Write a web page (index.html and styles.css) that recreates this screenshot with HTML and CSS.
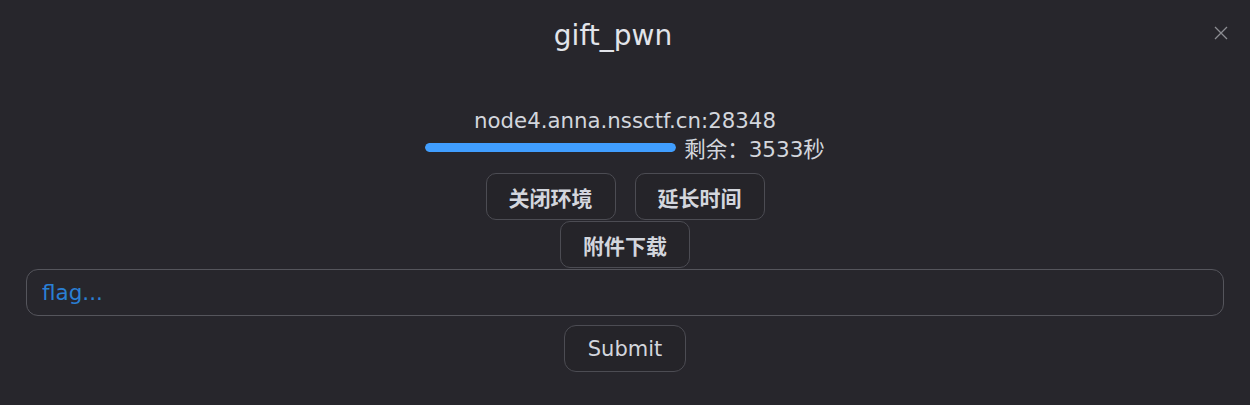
FILE: index.html
```html
<!DOCTYPE html>
<html lang="en">
  <head>
    <meta charset="UTF-8" />
    <meta name="viewport" content="width=device-width, initial-scale=1.0" />
    <title>gift_pwn</title>
    <link rel="stylesheet" href="styles.css">
  </head>
  <body>
    <div class="dialog">
      <div class="dialog-header">
        <h2 class="dialog-title">gift_pwn</h2>
        <button class="close-btn" aria-label="close">
          <svg width="16" height="16" viewBox="0 0 16 16">
            <path d="M2 2 L14 14 M14 2 L2 14" stroke="#8c8d92" stroke-width="1.3" fill="none" />
          </svg>
        </button>
      </div>

      <div class="env-info">
        <p class="env-host">node4.anna.nssctf.cn:28348</p>
        <div class="env-timer">
          <div class="progress"><div class="progress-bar" style="width: 100%"></div></div>
          <span class="time-left">剩余：3533秒</span>
        </div>
      </div>

      <div class="btn-row">
        <button class="btn">关闭环境</button>
        <button class="btn">延长时间</button>
      </div>
      <div class="btn-row">
        <button class="btn">附件下载</button>
      </div>

      <div class="flag-form">
        <input type="text" class="flag-input" placeholder="flag..." />
        <button class="submit-btn">Submit</button>
      </div>
    </div>
  </body>
</html>
```
FILE: styles.css
```css
body {
  margin: 0;
  background: #27262c;
  font-family: "DejaVu Sans", "Noto Sans CJK SC", sans-serif;
  color: #d3d6dd;
}

.dialog-header {
  display: flex;
  align-items: center;
  height: 70px;
  padding: 0 17px;
}

.dialog-title {
  flex: 1;
  margin: 0;
  text-align: center;
  font-size: 28px;
  font-weight: normal;
  color: #e2e4ea;
}

.close-btn {
  width: 24px;
  height: 24px;
  margin-top: -4px;
  padding: 0;
  border: none;
  background: none;
  display: flex;
  align-items: center;
  justify-content: center;
}

.env-info {
  display: flex;
  flex-direction: column;
  align-items: center;
  margin-top: 38px;
}

.env-host {
  margin: 0;
  font-size: 21.3px;
  line-height: 26px;
}

.env-timer {
  display: flex;
  align-items: center;
  gap: 8px;
  height: 27px;
}

.progress {
  width: 251px;
  height: 9px;
  border-radius: 5px;
  background: #3a3a40;
  overflow: hidden;
}

.progress-bar {
  height: 100%;
  background: #409eff;
  border-radius: 5px;
}

.time-left {
  font-size: 21.5px;
}

.btn-row {
  display: flex;
  justify-content: center;
  gap: 19px;
}

.env-info + .btn-row {
  margin-top: 12px;
}

.btn-row + .btn-row {
  margin-top: 1px;
}

.btn {
  width: 130px;
  height: 47px;
  border: 1px solid #4c4c53;
  border-radius: 10px;
  background: #252429;
  color: #d3d6dd;
  font-family: inherit;
  font-size: 21px;
  font-weight: bold;
}

.flag-form {
  display: flex;
  flex-direction: column;
  align-items: center;
  gap: 9px;
  padding: 1px 26px 0;
}

.flag-input {
  box-sizing: border-box;
  width: 100%;
  height: 47px;
  padding: 0 15px;
  border: 1px solid #55555c;
  border-radius: 12px;
  background: #27262c;
  font-family: inherit;
  font-size: 21.5px;
  color: #d3d6dd;
}

.flag-input::placeholder {
  color: #2a7fd4;
}

.submit-btn {
  width: 122px;
  height: 47px;
  border: 1px solid #4c4c53;
  border-radius: 12px;
  background: #252429;
  color: #d3d6dd;
  font-family: inherit;
  font-size: 21px;
}
```
